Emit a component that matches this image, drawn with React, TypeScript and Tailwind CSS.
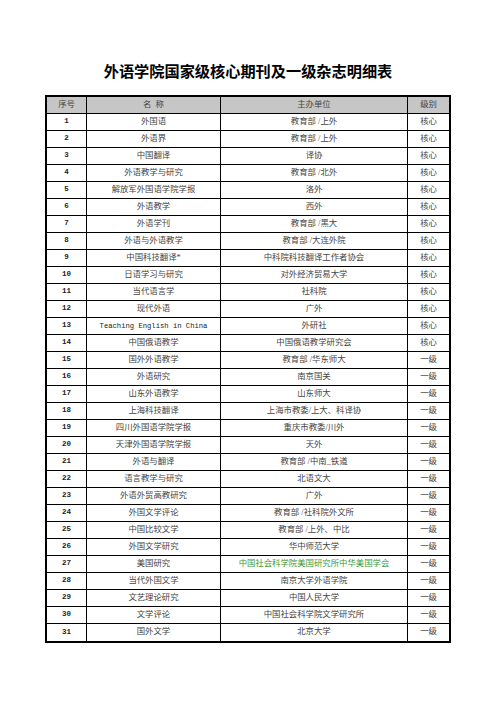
const rows: [string, string, string, boolean?][] = [
  ["外国语", "教育部 /上外", "核心"],
  ["外语界", "教育部 /上外", "核心"],
  ["中国翻译", "译协", "核心"],
  ["外语教学与研究", "教育部 /北外", "核心"],
  ["解放军外国语学院学报", "洛外", "核心"],
  ["外语教学", "西外", "核心"],
  ["外语学刊", "教育部 /黑大", "核心"],
  ["外语与外语教学", "教育部 /大连外院", "核心"],
  ["中国科技翻译*", "中科院科技翻译工作者协会", "核心"],
  ["日语学习与研究", "对外经济贸易大学", "核心"],
  ["当代语言学", "社科院", "核心"],
  ["现代外语", "广外", "核心"],
  ["Teaching English in China", "外研社", "核心"],
  ["中国俄语教学", "中国俄语教学研究会", "核心"],
  ["国外外语教学", "教育部 /华东师大", "一级"],
  ["外语研究", "南京国关", "一级"],
  ["山东外语教学", "山东师大", "一级"],
  ["上海科技翻译", "上海市教委/上大、科译协", "一级"],
  ["四川外国语学院学报", "重庆市教委/川外", "一级"],
  ["天津外国语学院学报", "天外", "一级"],
  ["外语与翻译", "教育部 /中南_铁道", "一级"],
  ["语言教学与研究", "北语文大", "一级"],
  ["外语外贸高教研究", "广外", "一级"],
  ["外国文学评论", "教育部 /社科院外文所", "一级"],
  ["中国比较文学", "教育部 /上外、中比", "一级"],
  ["外国文学研究", "华中师范大学", "一级"],
  ["美国研究", "中国社会科学院美国研究所中华美国学会", "一级", true],
  ["当代外国文学", "南京大学外语学院", "一级"],
  ["文艺理论研究", "中国人民大学", "一级"],
  ["文学评论", "中国社会科学院文学研究所", "一级"],
  ["国外文学", "北京大学", "一级"],
];

const cjk = "font-['Liberation_Serif','Noto_Sans_CJK_SC',serif]";
const mono = "font-['Liberation_Mono','Noto_Sans_CJK_SC',monospace]";

export default function App() {
  return (
    <div className="w-[496px] h-[702px] bg-white overflow-hidden">
      {/* Title */}
      <h1 className="pt-[59px] h-[82px] text-center text-[15.2px] leading-[22px] font-bold text-black font-['Noto_Sans_CJK_SC',sans-serif]">
        外语学院国家级核心期刊及一级杂志明细表
      </h1>

      {/* Table */}
      <div className={`mt-[13px] ml-[45px] w-[406px] border-2 border-black text-[8.4px] text-[#444] ${cjk}`}>
        <div className="flex h-[17px] border-b border-black bg-[#c6c6c6]">
          <div className="w-[40px] border-r border-black flex items-center justify-center">序号</div>
          <div className="w-[134px] border-r border-black flex items-center justify-center whitespace-pre">名  称</div>
          <div className="w-[187px] border-r border-black flex items-center justify-center">主办单位</div>
          <div className="flex-1 flex items-center justify-center">级别</div>
        </div>
        {rows.map(([name, org, level, green], i) => (
          <div
            key={i}
            className={`flex h-[17px] ${i < rows.length - 1 ? "border-b border-black" : ""}`}
          >
            <div className={`w-[40px] border-r border-black flex items-center justify-center text-[7.5px] font-bold text-[#222] ${mono}`}>
              {i + 1}
            </div>
            <div
              className={`w-[134px] border-r border-black flex items-center justify-center ${
                name.startsWith("Teaching") ? `${mono} text-[7.2px] text-[#222]` : ""
              }`}
            >
              {name}
            </div>
            <div
              className={`w-[187px] border-r border-black flex items-center justify-center whitespace-pre ${
                green ? "text-[#3a9b3a]" : ""
              }`}
            >
              {org}
            </div>
            <div className="flex-1 flex items-center justify-center">{level}</div>
          </div>
        ))}
      </div>
    </div>
  );
}
